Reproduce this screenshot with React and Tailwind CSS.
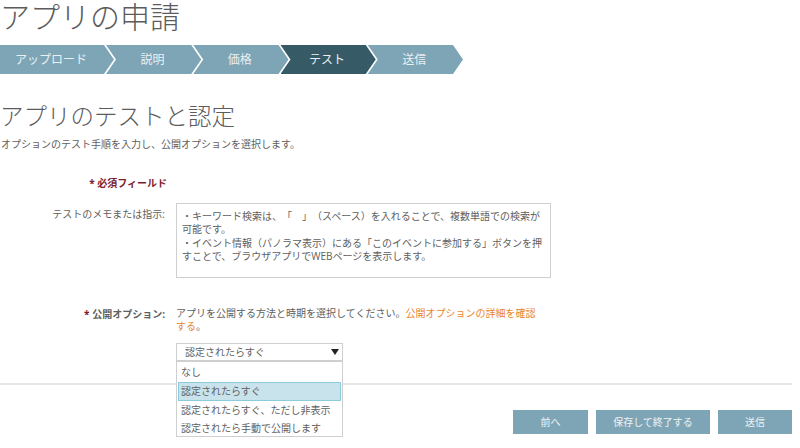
import React from 'react';

const fontStack = "font-['Open_Sans','Noto_Sans_CJK_JP',sans-serif]";

const steps = [
  { label: 'アップロード', width: 'w-[114px]', first: true },
  { label: '説明', width: 'w-[95.25px]' },
  { label: '価格', width: 'w-[95.25px]' },
  { label: 'テスト', width: 'w-[95.25px]', active: true },
  { label: '送信', width: 'w-[95.25px]' },
];

const options = ['なし', '認定されたらすぐ', '認定されたらすぐ、ただし非表示', '認定されたら手動で公開します'];

// chevron bar, each step overlaps the previous one so only a thin white line is left
const Step = ({ label, width, first, active }) => (
  <div
    className={`${width} ${first ? '' : '-ml-[8px]'} ${active ? 'bg-[#375a67]' : 'bg-[#7ea5b6]'} ${
      first
        ? '[clip-path:polygon(0_0,calc(100%-10px)_0,100%_50%,calc(100%-10px)_100%,0_100%)] pr-[12px]'
        : '[clip-path:polygon(0_0,calc(100%-10px)_0,100%_50%,calc(100%-10px)_100%,0_100%,10px_50%)] pl-[9px] pr-[11px]'
    } h-[29px] flex items-center justify-center text-[12px] text-[#e9f0f3]`}
  >
    {label}
  </div>
);

const Button = ({ children, width }) => (
  <button className={`${width} h-[24px] bg-[#7ea5b6] text-[10px] text-[#eef3f5] flex items-center justify-center`}>
    {children}
  </button>
);

export default function App() {
  return (
    <div className={`${fontStack} [text-spacing-trim:space-all] relative w-[800px] h-[448px] overflow-hidden bg-white text-[#606060]`}>
      <h1 className="h-[45px] text-[30px] leading-[34px] font-light text-[#5c5c5c]">アプリの申請</h1>

      <div className="flex">
        {steps.map((s) => (
          <Step key={s.label} {...s} />
        ))}
      </div>

      <h2 className="mt-[26px] text-[23.5px] leading-[32px] font-light text-[#5c5c5c]">アプリのテストと認定</h2>
      <p className="mt-[4px] ml-[1px] text-[10px] leading-[16px]">
        オプションのテスト手順を入力し、公開オプションを選択します。
      </p>

      <div className="mt-[23px] w-[167px] text-right text-[10px] leading-[16px] font-bold text-[#7d1c2e]">* 必須フィールド</div>

      <div className="mt-[12px] flex">
        <label className="w-[165px] shrink-0 pt-[3px] text-right text-[10px] leading-[16px]">テストのメモまたは指示:</label>
        <div className="ml-[11px] w-[375px] h-[75px] border border-[#cfcfcf] px-[5px] pt-[6px] text-[10px] leading-[13.4px]">
          ・キーワード検索は、「　」（スペース）を入れることで、複数単語での検索が可能です。
          <br />
          ・イベント情報（パノラマ表示）にある「このイベントに参加する」ボタンを押すことで、ブラウザアプリでWEBページを表示します。
        </div>
      </div>

      <div className="mt-[28px] flex">
        <label className="w-[165px] shrink-0 text-right text-[10px] leading-[16px] font-bold">
          <span className="text-[#7d1c2e]">* </span>公開オプション:
        </label>
        <div className="ml-[11px] w-[368px] pt-[1px] text-[10px] leading-[13px]">
          アプリを公開する方法と時期を選択してください。
          <span className="text-[#e8852f]">公開オプションの詳細を確認する</span>。
        </div>
      </div>

      <div className="absolute left-0 top-[383px] w-[792px] h-[2px] bg-[#e6e6e6]" />

      {/* open select, sits over the divider */}
      <div className="absolute left-[176px] top-[343px] w-[167px] z-10">
        <div className="h-[18px] border border-[#cfcfcf] bg-white pl-[8px] pr-[3px] flex items-center justify-between text-[10px]">
          <span>認定されたらすぐ</span>
          <span className="block w-0 h-0 border-x-[4px] border-x-transparent border-t-[6px] border-t-[#222222]" />
        </div>
        <ul className="h-[76px] border border-[#cfcfcf] bg-white px-[1px] pt-[1px] text-[10px] leading-[18.5px]">
          {options.map((o, i) => (
            <li
              key={o}
              className={i === 1 ? 'h-[19px] border border-[#8ccbdc] bg-[#c9e3ec] pl-[2px] leading-[17px]' : 'h-[18.5px] pl-[3px]'}
            >
              {o}
            </li>
          ))}
        </ul>
      </div>

      <div className="absolute left-[513px] top-[410px] flex gap-[8px]">
        <Button width="w-[75px]">前へ</Button>
        <Button width="w-[114px]">保存して終了する</Button>
        <Button width="w-[74px]">送信</Button>
      </div>
    </div>
  );
}
